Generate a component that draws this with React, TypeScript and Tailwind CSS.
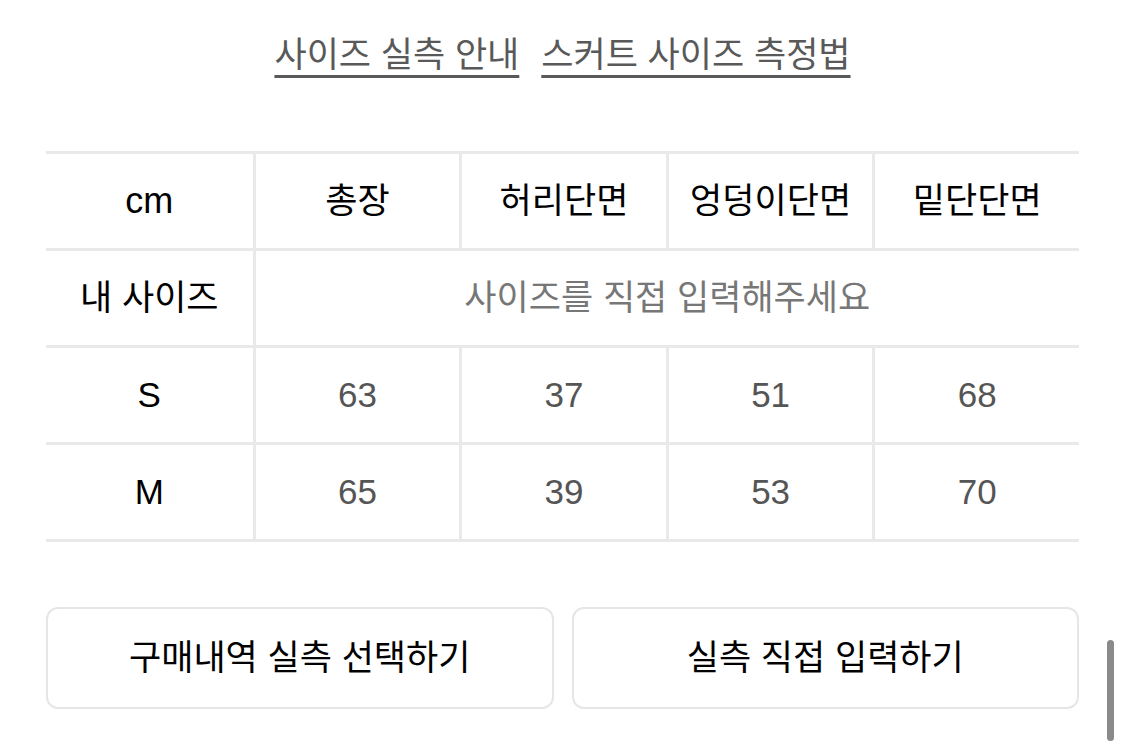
const headers = ['총장', '허리단면', '엉덩이단면', '밑단단면']

const rows = [
	{ size: 'S', values: ['63', '37', '51', '68'] },
	{ size: 'M', values: ['65', '39', '53', '70'] },
]

const font = { fontFamily: '"Liberation Sans", "Noto Sans CJK KR", sans-serif' }

export default function App() {
	return (
		<div className="relative h-[746px] w-[1125px] overflow-hidden bg-white" style={font}>
			<div className="flex justify-center gap-[22px] pt-[32px] text-[35px] leading-[46px] text-[#595959]">
				<span className="underline decoration-[3px] underline-offset-[8px]">사이즈 실측 안내</span>
				<span className="underline decoration-[3px] underline-offset-[8px]">스커트 사이즈 측정법</span>
			</div>

			<div className="mx-[46px] mt-[73px] grid grid-cols-5 border-t-[3px] border-[#e9e9e9]">
				<div className="flex h-[97px] items-center justify-center border-b-[3px] border-[#e9e9e9] text-[36px] text-black">
					cm
				</div>
				{headers.map((h) => (
					<div
						key={h}
						className="flex h-[97px] items-center justify-center border-b-[3px] border-l-[3px] border-[#e9e9e9] text-[35px] text-black"
					>
						{h}
					</div>
				))}

				<div className="flex h-[97px] items-center justify-center border-b-[3px] border-[#e9e9e9] text-[35px] text-black">
					내 사이즈
				</div>
				<div className="col-span-4 flex h-[97px] items-center justify-center border-b-[3px] border-l-[3px] border-[#e9e9e9] text-[35px] text-[#777]">
					사이즈를 직접 입력해주세요
				</div>

				{rows.map((r) => (
					<div key={r.size} className="contents">
						<div className="flex h-[97px] items-center justify-center border-b-[3px] border-[#e9e9e9] text-[35px] text-black">
							{r.size}
						</div>
						{r.values.map((v, i) => (
							<div
								key={i}
								className="flex h-[97px] items-center justify-center border-b-[3px] border-l-[3px] border-[#e9e9e9] text-[35px] text-[#555]"
							>
								{v}
							</div>
						))}
					</div>
				))}
			</div>

			<div className="mx-[46px] mt-[65px] flex gap-[18px]">
				<button className="flex h-[102px] flex-1 items-center justify-center rounded-[12px] border-[2px] border-[#e6e6e6] text-[35px] text-black">
					구매내역 실측 선택하기
				</button>
				<button className="flex h-[102px] flex-1 items-center justify-center rounded-[12px] border-[2px] border-[#e6e6e6] text-[35px] text-black">
					실측 직접 입력하기
				</button>
			</div>

			<div className="absolute left-[1107px] top-[640px] h-[101px] w-[7px] rounded-full bg-[#8a8a8a]" />
		</div>
	)
}
